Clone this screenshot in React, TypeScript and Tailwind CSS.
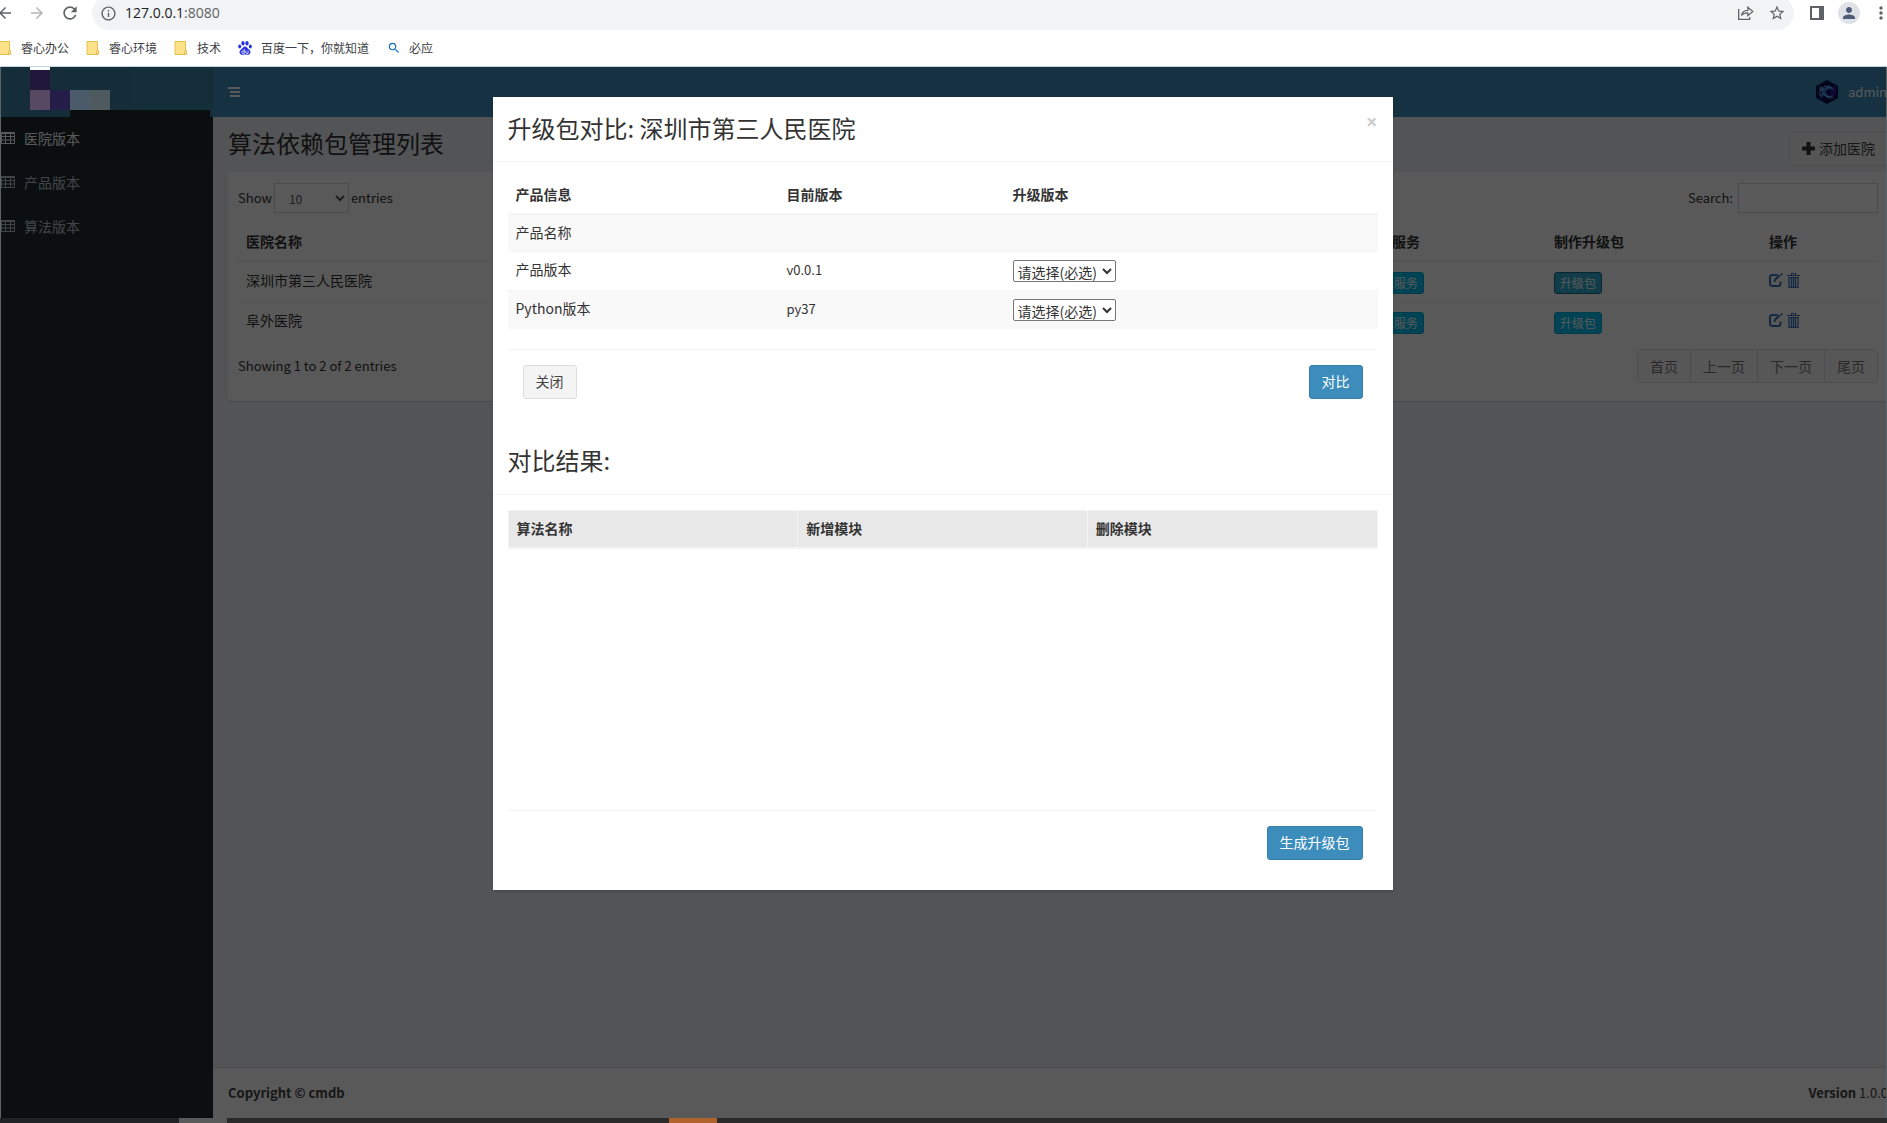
import React, { useState } from "react";
import {
  MdArrowBack,
  MdArrowForward,
  MdRefresh,
  MdInfoOutline,
  MdStarBorder,
  MdPerson,
  MdMoreVert,
  MdSearch,
} from "react-icons/md";
import clsx from "clsx";

const menuItems = ["医院版本", "产品版本", "算法版本"];
const hospitals = ["深圳市第三人民医院", "阜外医院"];
const pages = ["首页", "上一页", "下一页", "尾页"];
const versionRows = [
  { label: "产品名称", current: "", selectable: false },
  { label: "产品版本", current: "v0.0.1", selectable: true },
  { label: "Python版本", current: "py37", selectable: true },
];
const resultColumns = ["算法名称", "新增模块", "删除模块"];

const FolderIcon = () => (
  <svg width="14" height="14" viewBox="0 0 14 14">
    <path d="M1 .5h10.5v9h1v4H1z" fill="#ffe38a" stroke="#e8bf4e" />
    <path d="M10.500 9.500v4" stroke="#e8bf4e" />
  </svg>
);

const BaiduIcon = () => (
  <svg width="14" height="14" viewBox="0 0 14 14" fill="#2932e1">
    <ellipse cx="5" cy="2.300" rx="1.600" ry="2.200" />
    <ellipse cx="9" cy="2.300" rx="1.600" ry="2.200" />
    <ellipse cx="1.700" cy="5.600" rx="1.500" ry="2" />
    <ellipse cx="12.300" cy="5.600" rx="1.500" ry="2" />
    <path d="M7 5.500c1.700 0 2.300 1.500 3.400 2.500 1.300 1.100 2.400 2 2 3.800-.4 2-2.400 2.200-3.600 1.900-1.200-.2-2.400-.2-3.600 0-1.200.3-3.200.1-3.600-1.900-.4-1.800.7-2.700 2-3.800 1.100-1 1.700-2.500 3.400-2.500z" />
    <path
      d="M6.300 8v4.300H4.800a1 1 0 0 1 0-2.300h1.500M7.900 9.700v2q0 .7.700.7h1.500V9.700"
      fill="none"
      stroke="#fff"
      strokeWidth=".8"
    />
  </svg>
);

const ShareIcon = () => (
  <svg width="16" height="14" viewBox="0 0 16 14" fill="none" stroke="#5f6368">
    <path d="M.7 3v10.300h11V11" strokeWidth="1.300" />
    <path d="M3.500 9.500C4 6 6.500 4.500 9.800 4.400V1.200L14.800 5.500l-5 4.200V6.800C7 6.800 5 7.500 3.500 9.500z" strokeWidth="1.200" />
  </svg>
);

const TableIcon = () => (
  <svg width="14" height="12" viewBox="0 0 14 12" fill="none" stroke="currentColor" className="shrink-0">
    <path d="M.5 1.500h13v10H.5zM0 .5h14M0 4.500h14M0 8h14M4.500 1v10.500M9.500 1v10.500" />
  </svg>
);

const PlusIcon = () => (
  <svg width="13" height="13" viewBox="0 0 13 13" fill="#333">
    <path d="M4.500 0h4v4.500H13v4H8.500V13h-4V8.500H0v-4h4.500z" />
  </svg>
);

const EditIcon = () => (
  <svg width="14" height="14" viewBox="0 0 14 14" fill="none" stroke="#3a74b8" strokeWidth="2">
    <path d="M8.500 2H3.500Q1 2 1 4.500v6Q1 13 3.500 13h5.500q2.500 0 2.500-2.500V8.500" />
    <path d="M5.500 8.700 6 6.800l4.800-4.800M12 .8l1.200 1.200" strokeWidth="2.200" />
  </svg>
);

const TrashIcon = () => (
  <svg width="13" height="15" viewBox="0 0 13 15" fill="none" stroke="#3a74b8">
    <path d="M4.500 2V.5h4V2M0 2.500h13M1 4.500h11" strokeWidth="1.200" />
    <path d="M2 5v9.500h9V5M4.500 5v9M6.500 5v9M8.500 5v9" strokeWidth="1.300" />
  </svg>
);

const BarsIcon = () => (
  <svg width="12" height="10" viewBox="0 0 12 10" fill="#fff">
    <path d="M0 0h12v2H0zM2 4h10v2H2zM2 8h10v2H2z" />
  </svg>
);

const Avatar = () => (
  <svg width="22" height="24" viewBox="0 0 22 24">
    <path d="M11 0 22 6v12l-11 6L0 18V6z" fill="#0c0c4a" />
    <path d="M14 8l6-2v9l-6 3z" fill="#2a1a90" />
    <path d="M3 6l3 6-2 7 4-4 3 3 7 1-6-4-3-3 4-3 6 1-6-5-4 3z" fill="#3c7fd8" />
    <path d="M5 11l4-5 7 2M6 13l5 4 6-1M4 8v8" stroke="#7fb8ff" fill="none" />
  </svg>
);

// pixelated brand in the top left corner
const BrandMosaic = () => (
  <svg width="212" height="51" viewBox="0 0 212 51" shapeRendering="crispEdges">
    <path d="M0 0h212v50H0z" fill="#152d38" />
    <path d="M130 0h79v43h-79z" fill="#142f39" />
    <path d="M69 43h140v8H69z" fill="#0a0e0f" />
    <path d="M29 0h20v3H29z" fill="#fff" />
    <path d="M29 3h20v20H29z" fill="#20173b" />
    <path d="M29 23h20v20H29z" fill="#574962" />
    <path d="M49 23h20v20H49z" fill="#241d47" />
    <path d="M69 23h20v20H69z" fill="#4b5b69" />
    <path d="M89 23h20v20H89z" fill="#4f5a5e" />
    <path d="M43 43h3v1h-3z" fill="#2d1457" />
  </svg>
);

const BrowserBar = () => (
  <header className="border-b border-[#c3d6dc] bg-white text-xs text-[#3c4043]">
    <div className="h-[30px] overflow-hidden">
      <div className="-mt-1 flex h-[34px] items-center">
        <div className="flex w-[92px] shrink-0 items-center gap-[14px] text-[#5f6368]">
          <button aria-label="Back" className="-ml-1">
            <MdArrowBack size={18} />
          </button>
          <button aria-label="Forward" className="text-[#b4b6b8]">
            <MdArrowForward size={18} />
          </button>
          <button aria-label="Reload">
            <MdRefresh size={20} />
          </button>
        </div>
        <div className="flex h-full flex-1 items-center gap-2 rounded-full bg-[#f1f3f4] px-2 text-[#5f6368]">
          <MdInfoOutline size={17} className="shrink-0" />
          <span className="flex-1 font-['Open_Sans',sans-serif] text-sm">
            <span className="text-[#202124]">127.0.0.1</span>:8080
          </span>
          <button aria-label="Share" className="mr-[6px]">
            <ShareIcon />
          </button>
          <button aria-label="Bookmark">
            <MdStarBorder size={18} />
          </button>
        </div>
        <div className="flex shrink-0 items-center text-[#5f6368]">
          <button aria-label="Side panel" className="ml-4 flex h-[14px] w-[14px] justify-end border-2 border-[#5f6368]">
            <span className="h-full w-[3px] bg-[#5f6368]" />
          </button>
          <button aria-label="Profile" className="ml-[14px] flex h-[22px] w-[22px] items-center justify-center rounded-full bg-[#dee1e6]">
            <MdPerson size={18} className="text-[#4d5b76]" />
          </button>
          <button aria-label="Menu" className="-mr-1 ml-[11px]">
            <MdMoreVert size={20} />
          </button>
        </div>
      </div>
    </div>
    <nav className="flex h-9 items-center">
      <a href="#" className="-ml-[2px] flex w-[88px] items-center gap-[9px]">
        <FolderIcon />
        睿心办公
      </a>
      <a href="#" className="flex w-[88px] items-center gap-[9px]">
        <FolderIcon />
        睿心环境
      </a>
      <a href="#" className="flex w-16 items-center gap-[9px]">
        <FolderIcon />
        技术
      </a>
      <a href="#" className="flex w-[149px] items-center gap-[9px]">
        <BaiduIcon />
        百度一下，你就知道
      </a>
      <a href="#" className="flex items-center gap-2">
        <MdSearch size={14} className="text-[#1a73b8]" />
        必应
      </a>
    </nav>
  </header>
);

const Sidebar = () => (
  <aside className="w-[212px] shrink-0 bg-[#222d32]">
    <div className="h-[50px] bg-[#367fa9]" />
    <nav>
      {menuItems.map((item, index) => (
        <a
          key={item}
          href="#"
          className={clsx(
            "flex h-11 items-center gap-[9px] pb-[2px] text-sm leading-5",
            index === 0 ? "bg-[#1e282c] text-white" : "text-[#b8c7ce]"
          )}
        >
          <TableIcon />
          {item}
        </a>
      ))}
    </nav>
  </aside>
);

const HospitalBox = () => (
  <section className="rounded-[3px] bg-white px-[10px] pb-[18px] pt-[11px] shadow-[0_1px_1px_rgba(0,0,0,0.1)]">
    <div className="flex h-[30px] items-center justify-between">
      <label className="flex items-center gap-[2px] text-[13px]">
        Show
        <select className="h-[30px] w-[75px] border border-[#d2d6de] bg-white px-[10px] text-xs text-[#555]">
          <option>10</option>
        </select>
        entries
      </label>
      <label className="flex items-center gap-[5px] text-[13px]">
        Search:
        <input type="search" className="h-[30px] w-[140px] border border-[#d2d6de] px-[10px]" />
      </label>
    </div>
    <table className="mt-[10px] w-full table-fixed text-sm leading-5">
      <thead>
        <tr className="border-b-2 border-[#f4f4f4] text-left">
          <th className="px-2 pb-[9px] pt-2">医院名称</th>
          <th className="w-[190px] px-2 pb-[9px] pt-2">查看服务</th>
          <th className="w-[215px] px-2 pb-[9px] pt-2">制作升级包</th>
          <th className="w-[117px] px-2 pb-[9px] pt-2">操作</th>
        </tr>
      </thead>
      <tbody>
        {hospitals.map((name, index) => (
          <tr key={name} className="border-b border-[#f4f4f4] align-top last:border-b-0">
            <td className="p-2">{name}</td>
            <td className="px-2 pb-[7px] pt-[10px]">
              <button className="block h-[22px] rounded-[3px] border border-[#00acd6] bg-[#00c0ef] px-[5px] text-xs text-white">
                查看服务
              </button>
            </td>
            <td className="px-2 pb-[7px] pt-[10px]">
              <button
                className={clsx(
                  "block h-[22px] rounded-[3px] border px-[5px] text-xs text-white",
                  index === 0 ? "border-[#1b6d85] bg-[#31b0d5]" : "border-[#00acd6] bg-[#00c0ef]"
                )}
              >
                升级包
              </button>
            </td>
            <td className="p-2">
              <div className="flex h-5 items-center gap-1">
                <a href="#" aria-label="编辑">
                  <EditIcon />
                </a>
                <a href="#" aria-label="删除">
                  <TrashIcon />
                </a>
              </div>
            </td>
          </tr>
        ))}
      </tbody>
    </table>
    <div className="mt-2 flex items-start justify-between">
      <p className="pt-[7px] text-[13px] leading-5">Showing 1 to 2 of 2 entries</p>
      <nav className="flex overflow-hidden rounded border border-[#ddd] text-sm">
        {pages.map((page) => (
          <button
            key={page}
            className="h-8 border-r border-[#ddd] bg-[#fafafa] px-3 text-[#777] last:border-r-0"
          >
            {page}
          </button>
        ))}
      </nav>
    </div>
  </section>
);

const AdminPage = () => (
  // a little wider than the window, the right edge is scrolled out
  <div className="-mr-[17px] flex flex-1">
    <Sidebar />
    <div className="flex flex-1 flex-col bg-[#ecf0f5]">
      <div className="flex h-[50px] items-center justify-between bg-[#3c8dbc] pl-[15px] text-white">
        <button aria-label="Toggle navigation">
          <BarsIcon />
        </button>
        <a href="#" className="flex w-[87px] items-center gap-[10px] text-[13px]">
          <Avatar />
          admin
        </a>
      </div>
      <main className="flex-1 px-[15px]">
        <div className="flex h-[55px] items-start justify-between">
          <h1 className="pt-3 text-2xl leading-7 text-[#333]">算法依赖包管理列表</h1>
          <button className="mt-[15px] flex h-[34px] items-center gap-1 rounded-[3px] border border-[#ddd] bg-[#f4f4f4] px-3 pb-[2px] text-sm text-[#444]">
            <PlusIcon />
            添加医院
          </button>
        </div>
        <HospitalBox />
      </main>
      <footer className="flex justify-between border-t border-[#d2d6de] bg-white p-[15px] text-[13px] leading-5 text-[#444]">
        <strong>Copyright © cmdb</strong>
        <span>
          <b>Version</b> 1.0.0
        </span>
      </footer>
    </div>
  </div>
);

const CompareModal = ({ onClose }: { onClose: () => void }) => (
  <div className="absolute inset-0 flex items-start justify-center bg-black/65 pr-[2px] pt-[30px]">
    <div role="dialog" className="w-[900px] bg-white pb-[15px] shadow-[0_2px_3px_rgba(0,0,0,0.125)]">
      <div className="flex items-start justify-between border-b border-[#f4f4f4] px-[15px] pb-4 pt-[14px]">
        <h4 className="text-2xl leading-[34px]">升级包对比: 深圳市第三人民医院</h4>
        <button
          aria-label="Close"
          onClick={onClose}
          className="font-['Open_Sans',sans-serif] text-xl font-bold leading-[22px] text-[#ccc]"
        >
          ×
        </button>
      </div>
      <div className="px-[15px] pt-[15px]">
        <table className="w-full table-fixed text-sm leading-5">
          <thead>
            <tr className="border-b-2 border-[#f4f4f4] text-left">
              <th className="w-[271px] px-2 pb-[9px] pt-[7px]">产品信息</th>
              <th className="w-[226px] px-2 pb-[9px] pt-[7px]">目前版本</th>
              <th className="px-2 pb-[9px] pt-[7px]">升级版本</th>
            </tr>
          </thead>
          <tbody>
            {versionRows.map((row) => (
              <tr
                key={row.label}
                className="border-b border-[#f4f4f4] align-top odd:bg-[#f9f9f9] last:border-b-0"
              >
                <td className="px-2 pb-[9px] pt-[7px]">{row.label}</td>
                <td className="p-2 text-[13px]">{row.current}</td>
                <td className="p-2">
                  {row.selectable && (
                    <select
                      aria-label={row.label}
                      className="block h-[22px] w-[103px] rounded-[2px] border border-[#767676] bg-white text-sm leading-5 text-[#333]"
                    >
                      <option>请选择(必选)</option>
                    </select>
                  )}
                </td>
              </tr>
            ))}
          </tbody>
        </table>
        <div className="mt-5 flex justify-between border-t border-[#f4f4f4] p-[15px]">
          <button
            onClick={onClose}
            className="h-[34px] rounded-[3px] border border-[#ddd] bg-[#f4f4f4] px-3 pb-[2px] text-sm text-[#444]"
          >
            关闭
          </button>
          <button className="h-[34px] rounded-[3px] border border-[#367fa9] bg-[#3c8dbc] px-3 pb-[2px] text-sm text-white">
            对比
          </button>
        </div>
      </div>
      <h4 className="border-b border-[#f4f4f4] px-[15px] pb-[17px] pt-[29px] text-2xl leading-[34px]">对比结果:</h4>
      <div className="p-[15px]">
        <div className="h-[300px]">
          <table className="w-full table-fixed border border-[#f4f4f4] text-sm leading-5">
            <thead>
              <tr className="border-b-2 border-[#f4f4f4] bg-[#e8e8e8] text-left">
                {resultColumns.map((column) => (
                  <th key={column} className="border-r border-[#f4f4f4] px-2 pb-[9px] pt-[7px]">
                    {column}
                  </th>
                ))}
              </tr>
            </thead>
          </table>
        </div>
        <div className="flex justify-end border-t border-[#f4f4f4] px-[15px] pt-[15px]">
          <button className="h-[34px] rounded-[3px] border border-[#367fa9] bg-[#3c8dbc] px-3 pb-[2px] text-sm text-white">
            生成升级包
          </button>
        </div>
      </div>
    </div>
  </div>
);

const App: React.FC = () => {
  const [openModal, setOpenModal] = useState(true);

  return (
    <div className="flex min-h-screen flex-col bg-[#2a2a2a] font-['Noto_Sans_CJK_SC',sans-serif] text-[#333]">
      <BrowserBar />
      <div className="relative flex flex-1 flex-col overflow-hidden border-x border-[#5a6468]">
        <AdminPage />
        {openModal && <CompareModal onClose={() => setOpenModal(false)} />}
        <div className="absolute left-0 top-0">
          <BrandMosaic />
        </div>
      </div>
      <div className="flex h-[5px]">
        <div className="w-[179px] bg-[#202325]" />
        <div className="w-12 bg-[#595959]" />
        <div className="w-[442px]" />
        <div className="w-12 bg-[#b0632a]" />
      </div>
    </div>
  );
};

export default App;
